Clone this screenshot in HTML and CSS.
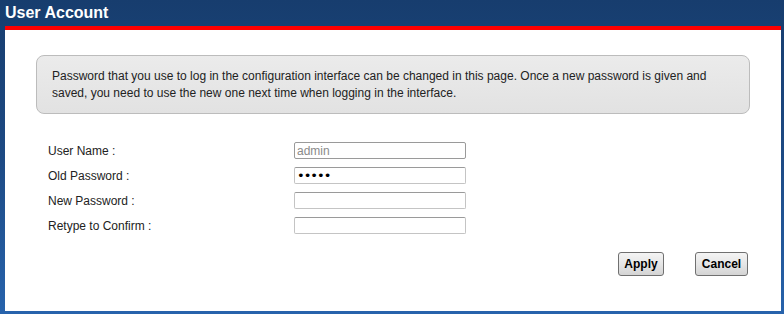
FILE: index.html
```html
<!DOCTYPE html>
<html lang="en">
<head>
  <meta charset="UTF-8">
  <title>User Account</title>
  <link rel="stylesheet" href="styles.css">
</head>
<body>

  <!-- PAGE FRAME -->
  <div class="frame">
    <h1 class="title">User Account</h1>

    <div class="panel">
      <div class="info-box">
        Password that you use to log in the configuration interface can be changed in this page. Once a new password is given and
        saved, you need to use the new one next time when logging in the interface.
      </div>

      <div class="form">
        <div class="row">
          <label for="userName">User Name :</label>
          <input type="text" id="userName" value="admin" readonly class="disabled">
        </div>
        <div class="row">
          <label for="oldPass">Old Password :</label>
          <input type="password" id="oldPass" value="admin">
        </div>
        <div class="row">
          <label for="newPass">New Password :</label>
          <input type="password" id="newPass">
        </div>
        <div class="row">
          <label for="confirmPass">Retype to Confirm :</label>
          <input type="password" id="confirmPass">
        </div>
      </div>

      <div class="actions">
        <button class="btn btn-apply">Apply</button>
        <button class="btn btn-cancel">Cancel</button>
      </div>
    </div>
  </div>

</body>
</html>
```

FILE: styles.css
```css
/* ------------- RESET & BASE ------------- */
* { margin: 0; padding: 0; box-sizing: border-box; }
html, body { height: 100%; }
body {
  font-family: 'Liberation Sans', Arial, sans-serif;
  font-size: 12px;
  color: #222;
  background: linear-gradient(to bottom, #173d6e 0%, #1d4a84 50%, #2763ac 100%);
  overflow: hidden;
}

/* ------------- FRAME ------------- */
.frame {
  height: 100%;
  padding: 0 3px 3px 5px;
  display: flex; flex-direction: column;
}
.title {
  height: 26px; line-height: 26px;
  color: #fff; font-size: 16px; font-weight: bold;
}
.panel {
  flex: 1;
  background: #fff;
  border-top: 4px solid #f00;
  padding: 25px 31px 0 31px;
}

/* ------------- INFO BOX ------------- */
.info-box {
  height: 59px;
  background: linear-gradient(to bottom, #ebebeb, #e2e2e2);
  border: 1px solid #bcbcbc;
  border-radius: 8px;
  padding: 12px 15px 0 15px;
  line-height: 17px;
  color: #222;
}

/* ------------- FORM ------------- */
.form { margin-top: 24px; padding-left: 12px; }
.row {
  height: 25px;
  display: flex; align-items: center;
}
.row label { width: 246px; }
.row input {
  width: 172px; height: 17px;
  border: 1px solid #c4c4c4;
  border-top-color: #9a9a9a;
  border-radius: 2px;
  padding: 0 2px;
  font-family: inherit; font-size: 12px;
  color: #000;
  outline: none;
}
.row input.disabled { color: #8a8a8a; border-color: #9a9a9a; }
.row input[type="password"] { font-family: 'DejaVu Sans', sans-serif; font-size: 13px; letter-spacing: -1px; line-height: 15px; }

/* ------------- BUTTONS ------------- */
.actions {
  margin-top: 14px;
  padding-right: 2px;
  display: flex; justify-content: flex-end; gap: 31px;
}
.btn {
  height: 24px;
  border: 1px solid #707070;
  border-radius: 3px;
  background: linear-gradient(to bottom, #f4f4f4 0%, #e6e6e6 50%, #d4d4d4 100%);
  font-family: inherit; font-size: 12px; font-weight: bold;
  color: #000;
  cursor: pointer;
}
.btn-apply { width: 46px; }
.btn-cancel { width: 53px; }
```
